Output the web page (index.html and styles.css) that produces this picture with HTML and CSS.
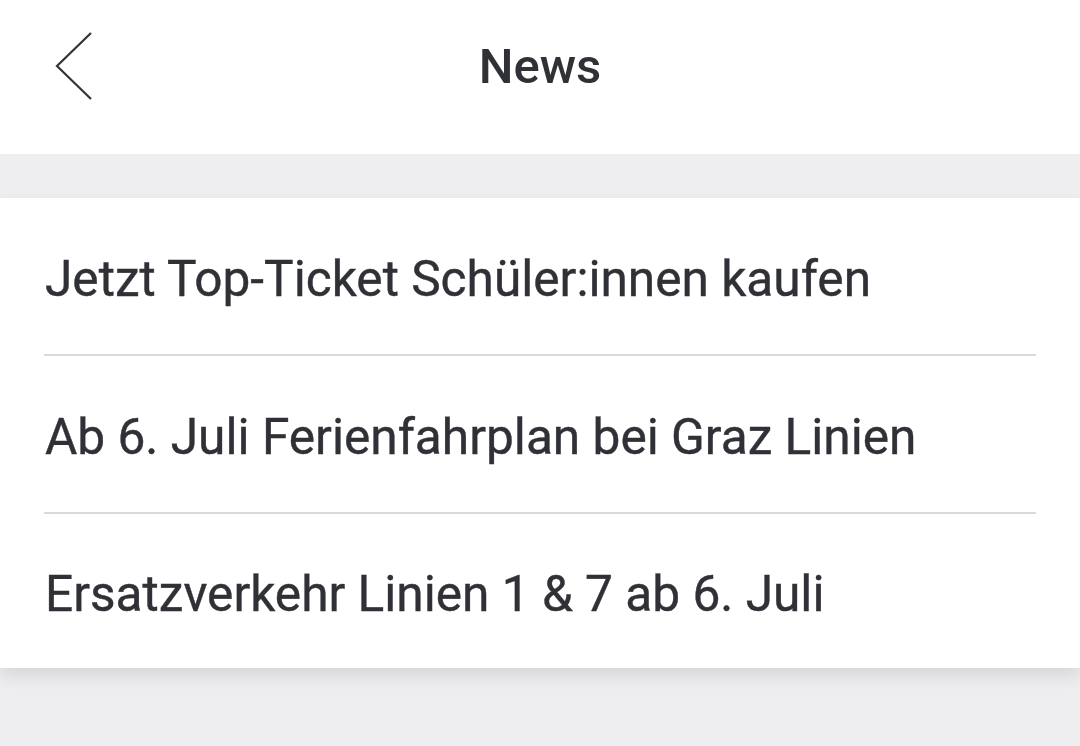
FILE: index.html
```html
<!DOCTYPE html>
<html lang="en">
<head>
    <meta charset="UTF-8">
    <meta name="viewport" content="width=device-width, initial-scale=1.0">
    <title>News</title>
    <link rel="stylesheet" href="styles.css">
</head>
<body>
    <div class="header">
        <a class="back" href="#">
            <svg width="40" height="70" viewBox="0 0 40 70">
                <polyline points="36,3 2,36 36,69" fill="none" stroke="#333438" stroke-width="2.2"/>
            </svg>
        </a>
        <h1>News</h1>
    </div>
    <div class="spacer"></div>
    <ul class="news-list">
        <li><a href="#">Jetzt Top-Ticket Schüler:innen kaufen</a></li>
        <li><a href="#">Ab 6. Juli Ferienfahrplan bei Graz Linien</a></li>
        <li><a href="#">Ersatzverkehr Linien 1 &amp; 7 ab 6. Juli</a></li>
    </ul>
</body>
</html>
```

FILE: styles.css
```css
/* General styling */
body {
    margin: 0;
    font-family: Roboto, "Noto Sans", sans-serif;
    background-color: #eeeef0;
    color: #2f3136;
    height: 100vh;
    overflow: hidden;
}
.header {
    height: 154px;
    background-color: #ffffff;
    display: flex;
    align-items: center;
    justify-content: center;
    position: relative;
}
.back {
    position: absolute;
    left: 55px;
    top: 30px;
    display: block;
}
.header h1 {
    margin: 0;
    font-size: 49px;
    font-weight: 500;
    margin-top: -22px;
}
.spacer {
    height: 44px;
}
.news-list {
    list-style: none;
    margin: 0;
    padding: 0;
    background-color: #ffffff;
    box-shadow: 0 8px 16px rgba(0, 0, 0, 0.1);
}
.news-list li {
    margin: 0 44px;
    height: 158px;
    display: flex;
    align-items: center;
    border-bottom: 2px solid #dadada;
    box-sizing: border-box;
    padding-top: 6px;
}
.news-list li:last-child {
    border-bottom: none;
    height: 154px;
}
.news-list a {
    text-decoration: none;
    color: inherit;
    font-size: 49.6px;
    padding-left: 1px;
    -webkit-text-stroke: 0.4px #2f3136;
}
```
